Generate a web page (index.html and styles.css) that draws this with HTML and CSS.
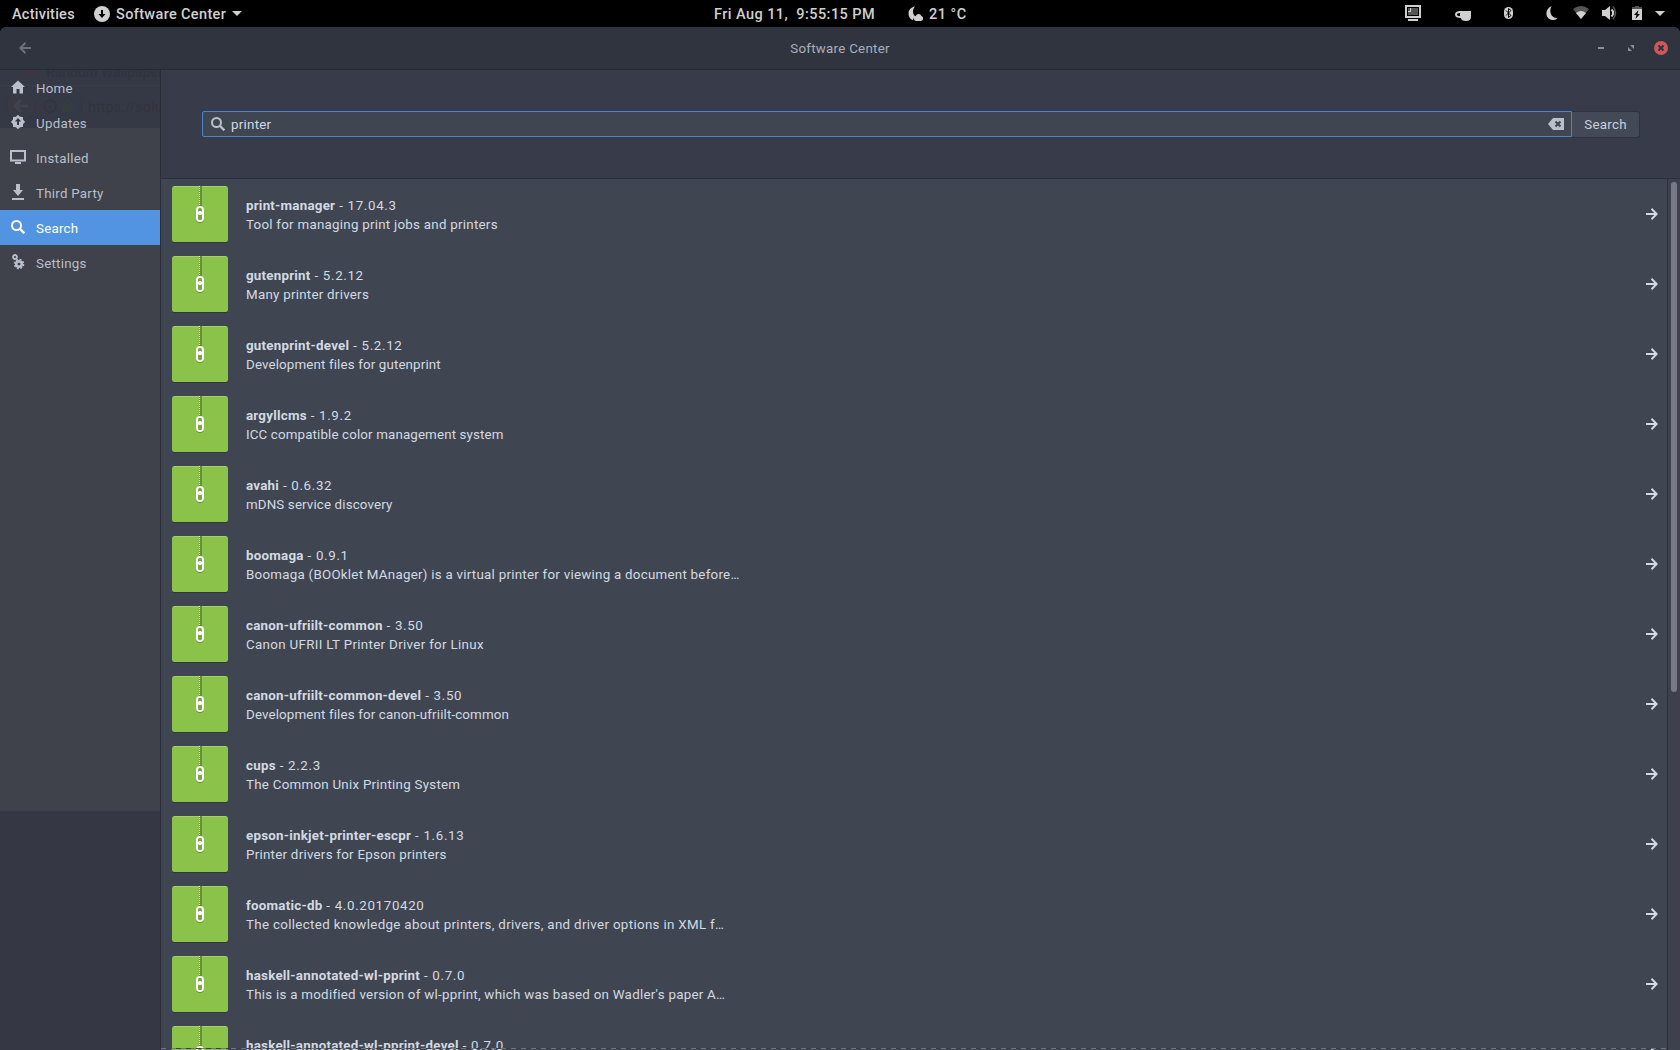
FILE: index.html
```html
<!DOCTYPE html>
<html lang="en">
<head>
<meta charset="utf-8">
<title>Software Center</title>
<link rel="stylesheet" href="styles.css">
</head>
<body>
<svg class="symbols" aria-hidden="true">
  <symbol id="zip" viewBox="0 0 56 58">
    <rect x="0" y="1" width="56" height="56" rx="2.500" fill="#303843"/>
    <rect width="56" height="56" rx="2.500" fill="#8bc34a"/>
    <path d="M2 0h52v1H2z" fill="#a5d065"/>
    <path d="M27 0h3v20h-3z" fill="#668f37"/>
    <path d="M27 .5h1m-1 2h1m-1 2h1m-1 2h1m-1 2h1m-1 2h1m-1 2h1m-1 2h1m-1 2h1m-1 2h1" stroke="#f0f6e8"/>
    <rect x="24" y="21" width="8" height="16" rx="4" fill="#668f37"/>
    <rect x="24" y="20" width="8" height="16" rx="4" fill="#fff"/>
    <rect x="26" y="22" width="4" height="4" rx="1.500" fill="#78a940"/>
    <rect x="26" y="28" width="4" height="6" rx="1.500" fill="#78a940"/>
    <path d="M27 25h2v4h-2z" fill="#fff"/>
  </symbol>
  <symbol id="go" viewBox="0 0 12 12"><path d="M0 6h11M5.500.8 10.700 6l-5.200 5.200" fill="none" stroke="#d3dae3" stroke-width="2"/></symbol>
  <symbol id="find" viewBox="0 0 14 14"><circle cx="5.500" cy="5.500" r="4.500" fill="none" stroke="currentColor" stroke-width="2"/><path d="m8.800 8.800 4.500 4.500" stroke="currentColor" stroke-width="2.300"/></symbol>
</svg>
<header class="panel">
  <span class="activities">Activities</span>
  <svg class="app-icon" viewBox="0 0 16 16"><circle cx="8" cy="8" r="8" fill="#d0d0d0"/><path d="M7 4h2v4h2.500L8 12 4.500 8H7z" fill="#000"/></svg>
  <span class="app-name">Software Center</span>
  <svg class="app-caret" viewBox="0 0 10 5"><path d="M0 0h10L5 5z" fill="#d0d0d0"/></svg>
  <span class="clock">Fri Aug 11,&nbsp; 9:55:15 PM</span>
  <svg class="weather" viewBox="0 0 16 16"><path d="M7 .5C-1 1.500-1.500 12 5 14.200c.2-2 1.300-3 2.500-3.500C4.500 8 4 4 7 .5z" fill="#d0d0d0"/><path d="M8 15a2.600 2.600 0 0 1-.3-5.100A3.200 3.200 0 0 1 13.500 10 2.600 2.600 0 0 1 13 15z" fill="#d0d0d0"/></svg>
  <span class="temp">21 °C</span>
  <svg class="tray" viewBox="0 0 280 27" fill="#d0d0d0">
    <path d="M6 6h14v11H6z" fill="none" stroke="#d0d0d0" stroke-width="2"/><path d="M8 8h10v7H8z" fill="#555"/><path d="M8 11h2V8h1v4H8zM8 19h10v2H8z"/>
    <path d="M60 11h11v6q0 4-5 4-5 0-5-3-6 0-6-3.500Q55 11 60 11zm0 2q-3 0-3 1.500T60 16z" fill-rule="evenodd"/>
    <rect x="104" y="7" width="9" height="12" rx="4.500"/><path d="m106 10.500 5 5-2.500 2v-9l2.500 2-5 5" fill="none" stroke="#000"/>
    <path d="M151.500 6c-7 3-7 14 2 14 2 0 3-.7 4-2-6 .5-9-6-6-12z"/>
    <path d="M173 9q8-6 16 0l-8 10z" fill="#555"/><path d="M176 13q5-4 10 0l-5 6z"/>
    <path d="M202 10h3l5-4v14l-5-4h-3z"/><path d="M211.500 9.500q3.500 3.500 0 7" fill="none" stroke="#d0d0d0" stroke-width="2"/><path d="M213 6.500q5 6.500 0 13" fill="none" stroke="#555" stroke-width="1.500"/>
    <path d="M235 6h4v1h3v3h-10V7h3z" fill="#555"/><path d="M232 9h10v11h-10z"/><path d="m238.500 10-4.500 5h2.500l-1 4 4.500-5h-2.500z" fill="#000"/>
    <path d="M255 11h10l-5 5z"/>
  </svg>
</header>
<div class="window">
  <header class="titlebar">
    <svg class="back" viewBox="0 0 12 12"><path d="M12 6H1M6.500.8 1.300 6l5.200 5.200" fill="none" stroke="#6b707d" stroke-width="2"/></svg>
    <h1>Software Center</h1>
    <svg class="controls" viewBox="0 0 70 14"><path d="M0 6h6v2H0z" fill="#8b909c"/><path d="M32 4h4v4zM30 6v4h4z" fill="#8b909c"/><circle cx="63" cy="7" r="7" fill="#cc575d"/><path d="m60.500 4.500 5 5m0-5-5 5" stroke="#2f343f" stroke-width="2"/></svg>
  </header>
  <div class="body">
    <nav class="sidebar">
      <div class="ghost" aria-hidden="true">
        <svg viewBox="0 0 160 58"><path d="M24 0h16v8H24z" fill="#3b3742"/><path d="M0 15.500h160" stroke="#393d48"/><circle cx="21" cy="36" r="14.500" fill="#373a45" stroke="#333742"/><path d="M28 36H15m6-6-6 6 6 6" fill="none" stroke="#40434d" stroke-width="3"/><circle cx="50" cy="36" r="6" fill="none" stroke="#31353f" stroke-width="1.500"/><path d="M50 35v4m0-7v1.500" stroke="#31353f" stroke-width="1.500"/><path d="M63 35h10v7H63z" fill="#363d40"/><path d="M65 35v-2q3-4 6 0v2" fill="none" stroke="#363d40" stroke-width="2"/><path d="M81.500 28v16" stroke="#31353f"/></svg>
        <span class="ghost-title">Random Wallpaper</span>
        <span class="ghost-url">https://solu</span>
      </div>
      <a><svg viewBox="0 0 16 16"><path d="M8 1.500 15 8h-2v6.500H9.500V10h-3v4.500H3V8H1z" fill="currentColor"/></svg>Home</a>
      <a><svg viewBox="0 0 16 16"><path d="m8 .8 2 2 2.900.1.200 2.900 2 2.200-2 2.100-.2 2.900-2.900.200-2 2-2-2-2.900-.2-.2-2.900L.9 8l2-2.200.2-2.900L6 2.800zM8 4 4.800 7.500H7V11h2V7.500h2.200z" fill="currentColor" fill-rule="evenodd"/></svg>Updates</a>
      <a><svg viewBox="0 0 16 16"><path d="M1 2h14v9.500H1z" fill="none" stroke="currentColor" stroke-width="2"/><path d="M5 13h6v2H5z" fill="currentColor"/></svg>Installed</a>
      <a><svg viewBox="0 0 16 16"><path d="M6 0h4v6h3l-5 6-5-6h3zM2 14h12v2H2z" fill="currentColor"/></svg>Third Party</a>
      <a class="active"><svg viewBox="0 0 16 16"><use href="#find" x="1" y="1" width="14" height="14"/></svg>Search</a>
      <a><svg viewBox="0 0 16 16"><circle cx="5" cy="3" r="2" fill="none" stroke="currentColor" stroke-width="1.800"/><circle cx="9" cy="10" r="2.800" fill="none" stroke="currentColor" stroke-width="2.600"/><circle cx="9" cy="10" r="4.500" fill="none" stroke="currentColor" stroke-width="1.500" stroke-dasharray="2 1.530"/></svg>Settings</a>
    </nav>
    <main>
      <div class="searchbar">
        <div class="entry"><svg class="find"><use href="#find"/></svg><span>printer</span><svg class="clear" viewBox="0 0 16 12"><path d="M5 0h11v12H5L0 6z" fill="#b9bfcb"/><path d="m7.500 3.500 5 5m0-5-5 5" stroke="#404651" stroke-width="2"/></svg></div>
        <button>Search</button>
      </div>
      <div class="results">
        <ul>
          <li><svg class="pkg"><use href="#zip"/></svg><div><p class="name"><b>print-manager</b> - 17.04.3</p><p>Tool for managing print jobs and printers</p></div><svg class="go"><use href="#go"/></svg></li>
          <li><svg class="pkg"><use href="#zip"/></svg><div><p class="name"><b>gutenprint</b> - 5.2.12</p><p>Many printer drivers</p></div><svg class="go"><use href="#go"/></svg></li>
          <li><svg class="pkg"><use href="#zip"/></svg><div><p class="name"><b>gutenprint-devel</b> - 5.2.12</p><p class="tight">Development files for gutenprint</p></div><svg class="go"><use href="#go"/></svg></li>
          <li><svg class="pkg"><use href="#zip"/></svg><div><p class="name"><b>argyllcms</b> - 1.9.2</p><p class="tight">ICC compatible color management system</p></div><svg class="go"><use href="#go"/></svg></li>
          <li><svg class="pkg"><use href="#zip"/></svg><div><p class="name"><b>avahi</b> - 0.6.32</p><p class="tight">mDNS service discovery</p></div><svg class="go"><use href="#go"/></svg></li>
          <li><svg class="pkg"><use href="#zip"/></svg><div><p class="name"><b>boomaga</b> - 0.9.1</p><p>Boomaga (BOOklet MAnager) is a virtual printer for viewing a document before…</p></div><svg class="go"><use href="#go"/></svg></li>
          <li><svg class="pkg"><use href="#zip"/></svg><div><p class="name"><b>canon-ufriilt-common</b> - 3.50</p><p class="loose">Canon UFRII LT Printer Driver for Linux</p></div><svg class="go"><use href="#go"/></svg></li>
          <li><svg class="pkg"><use href="#zip"/></svg><div><p class="name"><b>canon-ufriilt-common-devel</b> - 3.50</p><p class="tight">Development files for canon-ufriilt-common</p></div><svg class="go"><use href="#go"/></svg></li>
          <li><svg class="pkg"><use href="#zip"/></svg><div><p class="name"><b>cups</b> - 2.2.3</p><p>The Common Unix Printing System</p></div><svg class="go"><use href="#go"/></svg></li>
          <li><svg class="pkg"><use href="#zip"/></svg><div><p class="name"><b>epson-inkjet-printer-escpr</b> - 1.6.13</p><p>Printer drivers for Epson printers</p></div><svg class="go"><use href="#go"/></svg></li>
          <li><svg class="pkg"><use href="#zip"/></svg><div><p class="name"><b>foomatic-db</b> - 4.0.20170420</p><p class="loose">The collected knowledge about printers, drivers, and driver options in XML f…</p></div><svg class="go"><use href="#go"/></svg></li>
          <li><svg class="pkg"><use href="#zip"/></svg><div><p class="name"><b>haskell-annotated-wl-pprint</b> - 0.7.0</p><p>This is a modified version of wl-pprint, which was based on Wadler's paper A…</p></div><svg class="go"><use href="#go"/></svg></li>
          <li><svg class="pkg"><use href="#zip"/></svg><div><p class="name"><b>haskell-annotated-wl-pprint-devel</b> - 0.7.0</p></div><svg class="go"><use href="#go"/></svg></li>
        </ul>
        <div class="scroll"><div class="thumb"></div></div>
        <div class="edge"></div>
      </div>
    </main>
  </div>
</div>
</body>
</html>
```
FILE: styles.css
```css
* { box-sizing: border-box; margin: 0; padding: 0; }
body {
  width: 1680px; height: 1050px; overflow: hidden; background: #000;
  display: flex; flex-direction: column;
  font: 13.33px/19px Roboto, sans-serif; letter-spacing: .26px; color: #d3dae3;
}
svg { flex: none; display: block; }
.symbols { position: absolute; width: 0; height: 0; }

.panel { height: 27px; display: flex; align-items: center; padding-left: 12px; font-weight: 500; font-size: 14.5px; letter-spacing: .25px; color: #d0d0d0; white-space: nowrap; }
.panel span { padding-top: 2px; }
.activities { width: 82px; }
.app-icon { width: 16px; height: 16px; }
.app-name { margin-left: 6px; width: 116px; letter-spacing: .35px; }
.app-caret { width: 10px; height: 5px; }
.clock { margin-left: 472px; width: 194px; letter-spacing: .44px; }
.weather { width: 16px; height: 16px; }
.temp { margin-left: 5px; letter-spacing: .5px; }
.tray { width: 280px; height: 27px; margin-left: auto; }

.window { flex: 1; min-height: 0; display: flex; flex-direction: column; border-radius: 6px 6px 0 0; overflow: hidden; background: #383b4a; }
.titlebar { height: 43px; flex: none; display: flex; align-items: center; justify-content: space-between; padding: 0 12px 0 19px; background: #30343f; border-bottom: 1px solid #262933; }
.back { width: 12px; height: 12px; margin-right: 51px; }
.titlebar h1 { font: inherit; padding-top: 1px; color: #a8afbb; }
.controls { width: 70px; height: 14px; }

.body { flex: 1; min-height: 0; display: flex; }
.sidebar { position: relative; width: 161px; flex: none; border-right: 1px solid #2b2e39; background: linear-gradient(#353945 58px, #3f424b 58px 741px, #353844 741px); color: #b9bfcb; }
.sidebar a { position: relative; height: 35px; display: flex; align-items: center; gap: 10px; padding: 2px 0 0 10px; letter-spacing: .25px; }
.sidebar a svg { width: 16px; height: 16px; margin-top: -4px; }
.sidebar .active { background: #5294e2; color: #fff; }
.ghost { position: absolute; inset: 0 0 auto; height: 58px; overflow: hidden; color: #30343f; white-space: nowrap; }
.ghost svg { width: 160px; height: 58px; }
.ghost span { position: absolute; font-size: 14px; }
.ghost-title { left: 46px; top: -7px; font-weight: 500; letter-spacing: -.1px; }
.ghost-url { left: 88px; top: 28px; }

main { flex: 1; min-width: 0; display: flex; flex-direction: column; }
.searchbar { height: 109px; flex: none; display: flex; align-items: flex-start; padding: 41px 40px 0 41px; border-bottom: 1px solid #2b2e3a; }
.entry { flex: 1; height: 26px; display: flex; align-items: center; border: 1px solid #4a84c9; border-radius: 2px 0 0 2px; background: #404651; padding: 0 7px 0 8px; }
.find { width: 14px; height: 14px; color: #b9bfcb; }
.entry span { margin-left: 6px; flex: 1; }
.clear { width: 16px; height: 12px; }
.searchbar button { width: 68px; height: 27px; font: inherit; letter-spacing: inherit; color: #c9d0da; background: #444957; border: 1px solid #2e323d; border-left: 0; border-radius: 0 3px 3px 0; }

.results { position: relative; flex: 1; min-height: 0; display: flex; background: #404651; }
.results ul { flex: 1; list-style: none; overflow: hidden; }
.results li { height: 70px; display: flex; align-items: flex-start; padding: 7px 9px 0 11px; }
.pkg { width: 56px; height: 58px; }
.results li div { flex: 1; margin: 10px 0 0 18px; white-space: nowrap; }
.name { letter-spacing: .66px; }
.name b { letter-spacing: .24px; }
.tight { letter-spacing: .14px; }
.loose { letter-spacing: .33px; }
.go { width: 12px; height: 12px; margin-top: 22px; }
.scroll { width: 13px; border-left: 1px solid #2c303b; background: #3d414e; padding: 3px 0 0 3px; }
.thumb { width: 6px; height: 510px; border-radius: 3px; background: #767b87; }
.edge { position: absolute; left: 0; right: 13px; bottom: 1px; height: 1px; background: repeating-linear-gradient(90deg, #737781 0 5px, #393d47 5px 10px); }
```
